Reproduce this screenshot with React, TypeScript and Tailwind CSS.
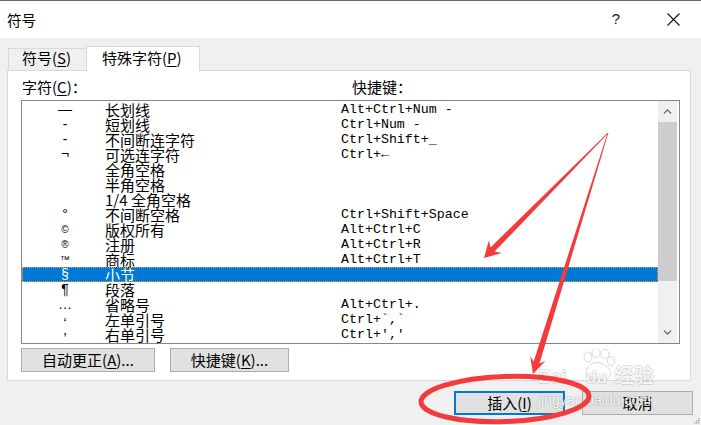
import { ChevronUp, ChevronDown } from 'lucide-react'

type Row = { sym: string; name: string; key: string; small?: boolean; low?: boolean }

const rows: Row[] = [
  { sym: '—', name: '长划线', key: 'Alt+Ctrl+Num -' },
  { sym: '-', name: '短划线', key: 'Ctrl+Num -' },
  { sym: '-', name: '不间断连字符', key: 'Ctrl+Shift+_' },
  { sym: '¬', name: '可选连字符', key: 'Ctrl+←' },
  { sym: '', name: '全角空格', key: '' },
  { sym: '', name: '半角空格', key: '' },
  { sym: '', name: '1/4 全角空格', key: '' },
  { sym: '°', name: '不间断空格', key: 'Ctrl+Shift+Space' },
  { sym: '©', name: '版权所有', key: 'Alt+Ctrl+C', small: true },
  { sym: '®', name: '注册', key: 'Alt+Ctrl+R', small: true },
  { sym: '™', name: '商标', key: 'Alt+Ctrl+T', small: true },
  { sym: '§', name: '小节', key: '' },
  { sym: '¶', name: '段落', key: '' },
  { sym: '…', name: '省略号', key: 'Alt+Ctrl+.' },
  { sym: '‘', name: '左单引号', key: 'Ctrl+`,`', low: true },
  { sym: '’', name: '右单引号', key: "Ctrl+','", low: true },
]

const SELECTED = 11

// red marker strokes drawn over the screenshot
const Annotations = () => (
  <svg className="absolute inset-0 pointer-events-none" width="701" height="425" viewBox="0 0 701 425">
    <polygon
      fill="#f43b3b"
      points="608.3,132.3 494.6,250.6 501.7,252 484,257 488.9,239.3 490.4,246.4 607.7,131.7"
    />
    <polygon
      fill="#f43b3b"
      points="608.4,132.1 539.5,362.4 545.4,360.1 533,373 530.2,355.3 533.7,360.6 607.6,131.9"
    />
    <ellipse
      cx="505"
      cy="398"
      rx="84"
      ry="22.5"
      fill="none"
      stroke="#f43b3b"
      strokeWidth="5"
      transform="rotate(-2 505 398)"
    />
  </svg>
)

const Watermark = () => (
  <div className="absolute left-[536px] top-[346px] w-[130px] h-[64px] pointer-events-none font-['Liberation_Sans',sans-serif] font-bold text-white/90 [text-shadow:1px_0_0_rgba(0,0,0,0.12),-1px_0_0_rgba(0,0,0,0.12),0_1px_0_rgba(0,0,0,0.12),0_-1px_0_rgba(0,0,0,0.12)]">
    <svg className="absolute left-[44px] top-[2px]" width="36" height="32" viewBox="0 0 36 32">
      <g fill="rgba(255,255,255,0.6)" stroke="rgba(0,0,0,0.15)" strokeWidth="1">
        <ellipse cx="8" cy="8" rx="4" ry="5" />
        <ellipse cx="16" cy="4" rx="4" ry="4.5" />
        <ellipse cx="25" cy="5" rx="4" ry="4.5" />
        <ellipse cx="31" cy="12" rx="3.5" ry="4.5" />
        <path d="M6 26 C6 16 14 12 20 14 C28 16 32 22 30 28 C28 32 8 32 6 26 Z" />
      </g>
    </svg>
    <div className="absolute left-[2px] top-[20px] text-[19px] leading-[20px] tracking-tight">Bai</div>
    <div className="absolute left-[50px] top-[22px] text-[17px] leading-[18px]">du</div>
    <div className="absolute left-[78px] top-[17px] text-[20px] leading-[22px] font-['Noto_Sans_CJK_SC',sans-serif]">经验</div>
    <div className="absolute left-[2px] top-[46px] text-[14px] leading-[14px] font-normal">jingyan.baidu.com</div>
  </div>
)

const Grip = () => (
  <svg className="absolute right-[1px] bottom-[1px]" width="8" height="8" viewBox="0 0 8 8">
    <g fill="#b5b5b5">
      <rect x="6" y="2" width="1.5" height="1.5" />
      <rect x="4" y="4" width="1.5" height="1.5" />
      <rect x="6" y="4" width="1.5" height="1.5" />
      <rect x="2" y="6" width="1.5" height="1.5" />
      <rect x="4" y="6" width="1.5" height="1.5" />
      <rect x="6" y="6" width="1.5" height="1.5" />
    </g>
  </svg>
)

export default function App() {
  return (
    <div className="relative w-[701px] h-[425px] overflow-hidden bg-[#f0f0f0] border-t border-[#646464] text-black font-['Noto_Sans_CJK_SC',sans-serif]">
      {/* Title bar */}
      <div className="h-[37px] bg-white flex items-center pl-[7px] pr-[21px]">
        <span className="text-[14.5px] leading-[16px]">符号</span>
        <span className="ml-auto text-[15px] font-['Liberation_Sans',sans-serif] text-[#222]">?</span>
        <svg className="ml-[47px]" width="13" height="13" viewBox="0 0 13 13">
          <path d="M0.5 0.5 L12.5 12.5 M12.5 0.5 L0.5 12.5" stroke="#111" strokeWidth="1.1" />
        </svg>
      </div>

      {/* Tabs */}
      <div className="pt-[8px] px-[7px]">
        <div className="flex items-end h-[24px] text-[15px] leading-[16px]">
          <div className="ml-[1px] w-[78px] h-[22px] border-t border-l border-[#d9d9d9] bg-[#f0f0f0] pt-[1px] pl-[13px]">
            符号(<span className="underline underline-offset-2">S</span>)
          </div>
          <div className="relative z-10 w-[114px] h-[25px] -mb-px border-t border-l border-r border-[#d9d9d9] bg-white pt-[3px] pl-[15px]">
            特殊字符(<span className="underline underline-offset-2">P</span>)
          </div>
        </div>

        {/* Panel */}
        <div className="w-[684px] h-[311px] bg-white border border-[#d9d9d9] px-[13px]">
          <div className="h-[29px] pt-[8px] flex text-[15px] leading-[16px]">
            <span className="pl-[1px] w-[331px]">
              字符(<span className="underline underline-offset-2">C</span>)：
            </span>
            <span>快捷键：</span>
          </div>

          {/* List box */}
          <div className="w-[659px] h-[244px] border border-[#828790] flex">
            <div className="flex-1 pt-[1px]">
              {rows.map((r, i) => {
                const sel = i === SELECTED
                return (
                  <div
                    key={i}
                    className={`h-[15px] flex items-center ${
                      sel ? 'bg-[#0078d7] text-white outline-1 outline-dotted outline-[#f5a623] -outline-offset-1' : ''
                    }`}
                  >
                    <span
                      className={`w-[83px] pl-[3px] text-center ${r.small ? 'text-[10px]' : 'text-[14px]'} ${
                        r.low ? 'translate-y-[4px]' : ''
                      } leading-[15px] font-['Liberation_Sans',sans-serif]`}
                    >
                      {r.sym}
                    </span>
                    <span className="w-[236px] text-[15px] leading-[15px] whitespace-pre">{r.name}</span>
                    <span className="text-[13.3px] leading-[15px] font-['Liberation_Mono',monospace] whitespace-pre">
                      {r.key}
                    </span>
                  </div>
                )
              })}
            </div>

            {/* Scrollbar */}
            <div className="w-[19px] mr-[2px] bg-[#f0f0f0] flex flex-col">
              <div className="h-[21px] flex items-center justify-center text-[#606060]">
                <ChevronUp size={13} strokeWidth={2.5} />
              </div>
              <div className="h-[159px] bg-[#cdcdcd]" />
              <div className="flex-1" />
              <div className="h-[22px] flex items-center justify-center text-[#606060]">
                <ChevronDown size={13} strokeWidth={2.5} />
              </div>
            </div>
          </div>

          {/* Panel buttons */}
          <div className="mt-[4px] flex gap-[15px] text-[15px] leading-[16px]">
            <button className="w-[134px] h-[24px] bg-[#e1e1e1] border border-[#adadad] flex items-center justify-center">
              自动更正(<span className="underline underline-offset-2">A</span>)...
            </button>
            <button className="w-[119px] h-[24px] bg-[#e1e1e1] border border-[#adadad] flex items-center justify-center">
              快捷键(<span className="underline underline-offset-2">K</span>)...
            </button>
          </div>
        </div>
      </div>

      {/* Dialog buttons */}
      <div className="mt-[10px] pr-[8px] flex justify-end gap-[17px] text-[15px] leading-[16px]">
        <button className="w-[111px] h-[24px] bg-[#e1e1e1] border-2 border-[#0078d7] flex items-center justify-center">
          插入(<span className="underline underline-offset-2">I</span>)
        </button>
        <button className="w-[111px] h-[24px] bg-[#e1e1e1] border border-[#adadad] flex items-center justify-center">
          取消
        </button>
      </div>

      <Grip />
      <Watermark />
      <Annotations />
    </div>
  )
}
